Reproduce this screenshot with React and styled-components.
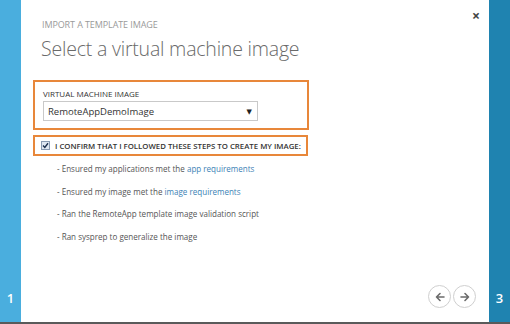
import styled, { createGlobalStyle } from "styled-components";

const Global = createGlobalStyle`
  html, body { margin: 0; padding: 0; }
  body { font-family: "Open Sans", "DejaVu Sans", sans-serif; background: #fff; }
`;

const Frame = styled.div`
  display: flex;
  width: 510px;
  height: 322px;
  border-bottom: 2px solid #5a5a5a;
`;

const Rail = styled.div`
  width: 21px;
  flex: none;
  background: ${(p) => p.color};
  display: flex;
  flex-direction: column;
  justify-content: flex-end;
  align-items: center;
  color: #fff;
  font-size: 13px;
  font-weight: 600;
  padding-bottom: 15px;
  box-sizing: border-box;
`;

const Main = styled.div`
  flex: 1;
  position: relative;
  display: flex;
  flex-direction: column;
  padding: 18px 13px 14px 12px;
`;

const Close = styled.div`
  position: absolute;
  top: 6px;
  right: 9px;
  font-size: 14px;
  font-weight: 700;
  color: #444;
`;

const Kicker = styled.div`
  margin-left: 9px;
  font-size: 9px;
  color: #9a9a9a;
  letter-spacing: -0.1px;
`;

const Title = styled.h1`
  margin: 4px 0 0 8px;
  font-size: 19.5px;
  font-weight: 300;
  color: #6a6a6a;
  letter-spacing: -0.2px;
`;

const Highlight = styled.div`
  width: ${(p) => p.w}px;
  box-sizing: border-box;
  border: 2px solid #e8873a;
`;

const FieldBox = styled(Highlight)`
  margin-top: 18px;
  padding: 6px 8px 7px;
`;

const Label = styled.div`
  font-size: 8px;
  color: #333;
  margin-bottom: 2px;
`;

const Select = styled.div`
  width: 215px;
  height: 20px;
  box-sizing: border-box;
  border: 1px solid #c9c9c9;
  display: flex;
  align-items: center;
  justify-content: space-between;
  padding: 0 5px 0 4px;
  font-size: 9.5px;
  color: #333;
`;

const Arrow = styled.span`
  font-size: 7px;
  color: #222;
`;

const ConfirmBox = styled(Highlight)`
  margin-top: 5px;
  height: 21px;
  display: flex;
  align-items: center;
  padding-left: 6px;
  gap: 5px;
`;

const Check = styled.span`
  width: 9px;
  height: 9px;
  box-sizing: border-box;
  border: 1px solid #8a9bb3;
  background: #dfe7f2;
  display: flex;
  align-items: center;
  justify-content: center;
`;

const ConfirmText = styled.span`
  font-size: 7.8px;
  font-weight: 600;
  color: #333;
  white-space: nowrap;
`;

const Steps = styled.ul`
  list-style: none;
  margin: 7px 0 0 24px;
  padding: 0;
  display: flex;
  flex-direction: column;
  gap: 10px;
`;

const Step = styled.li`
  font-size: 8.05px;
  line-height: 12.5px;
  color: #555;
`;

const Link = styled.span`
  color: #3b82b5;
`;

const Nav = styled.div`
  margin-top: auto;
  align-self: flex-end;
  display: flex;
  gap: 2px;
`;

const NavButton = styled.div`
  width: 23px;
  height: 23px;
  box-sizing: border-box;
  border-radius: 50%;
  border: 1.5px solid #cfcfcf;
  display: flex;
  align-items: center;
  justify-content: center;
`;

const ArrowIcon = ({ dir }) => (
  <svg width="12" height="12" viewBox="0 0 12 12">
    <g
      transform={dir === "left" ? "" : "rotate(180 6 6)"}
      fill="none"
      stroke="#6b6b6b"
      strokeWidth="1.6"
      strokeLinecap="round"
      strokeLinejoin="round"
    >
      <path d="M10 6H2.5M6 2.5L2.5 6 6 9.5" />
    </g>
  </svg>
);

export default function App() {
  return (
    <>
      <Global />
      <Frame>
        <Rail color="#4aaede">1</Rail>
        <Main>
          <Close>×</Close>
          <Kicker>IMPORT A TEMPLATE IMAGE</Kicker>
          <Title>Select a virtual machine image</Title>
          <FieldBox w={276}>
            <Label>VIRTUAL MACHINE IMAGE</Label>
            <Select>
              RemoteAppDemoImage
              <Arrow>▼</Arrow>
            </Select>
          </FieldBox>
          <ConfirmBox w={275}>
            <Check>
              <svg width="7" height="7" viewBox="0 0 7 7">
                <path d="M1 3.6L2.8 5.4 6 1.3" fill="none" stroke="#1d2f4d" strokeWidth="1.4" />
              </svg>
            </Check>
            <ConfirmText>I CONFIRM THAT I FOLLOWED THESE STEPS TO CREATE MY IMAGE:</ConfirmText>
          </ConfirmBox>
          <Steps>
            <Step>
              - Ensured my applications met the <Link>app requirements</Link>
            </Step>
            <Step>
              - Ensured my image met the <Link>image requirements</Link>
            </Step>
            <Step>- Ran the RemoteApp template image validation script</Step>
            <Step>- Ran sysprep to generalize the image</Step>
          </Steps>
          <Nav>
            <NavButton>
              <ArrowIcon dir="left" />
            </NavButton>
            <NavButton>
              <ArrowIcon dir="right" />
            </NavButton>
          </Nav>
        </Main>
        <Rail color="#1f83b0">3</Rail>
      </Frame>
    </>
  );
}
